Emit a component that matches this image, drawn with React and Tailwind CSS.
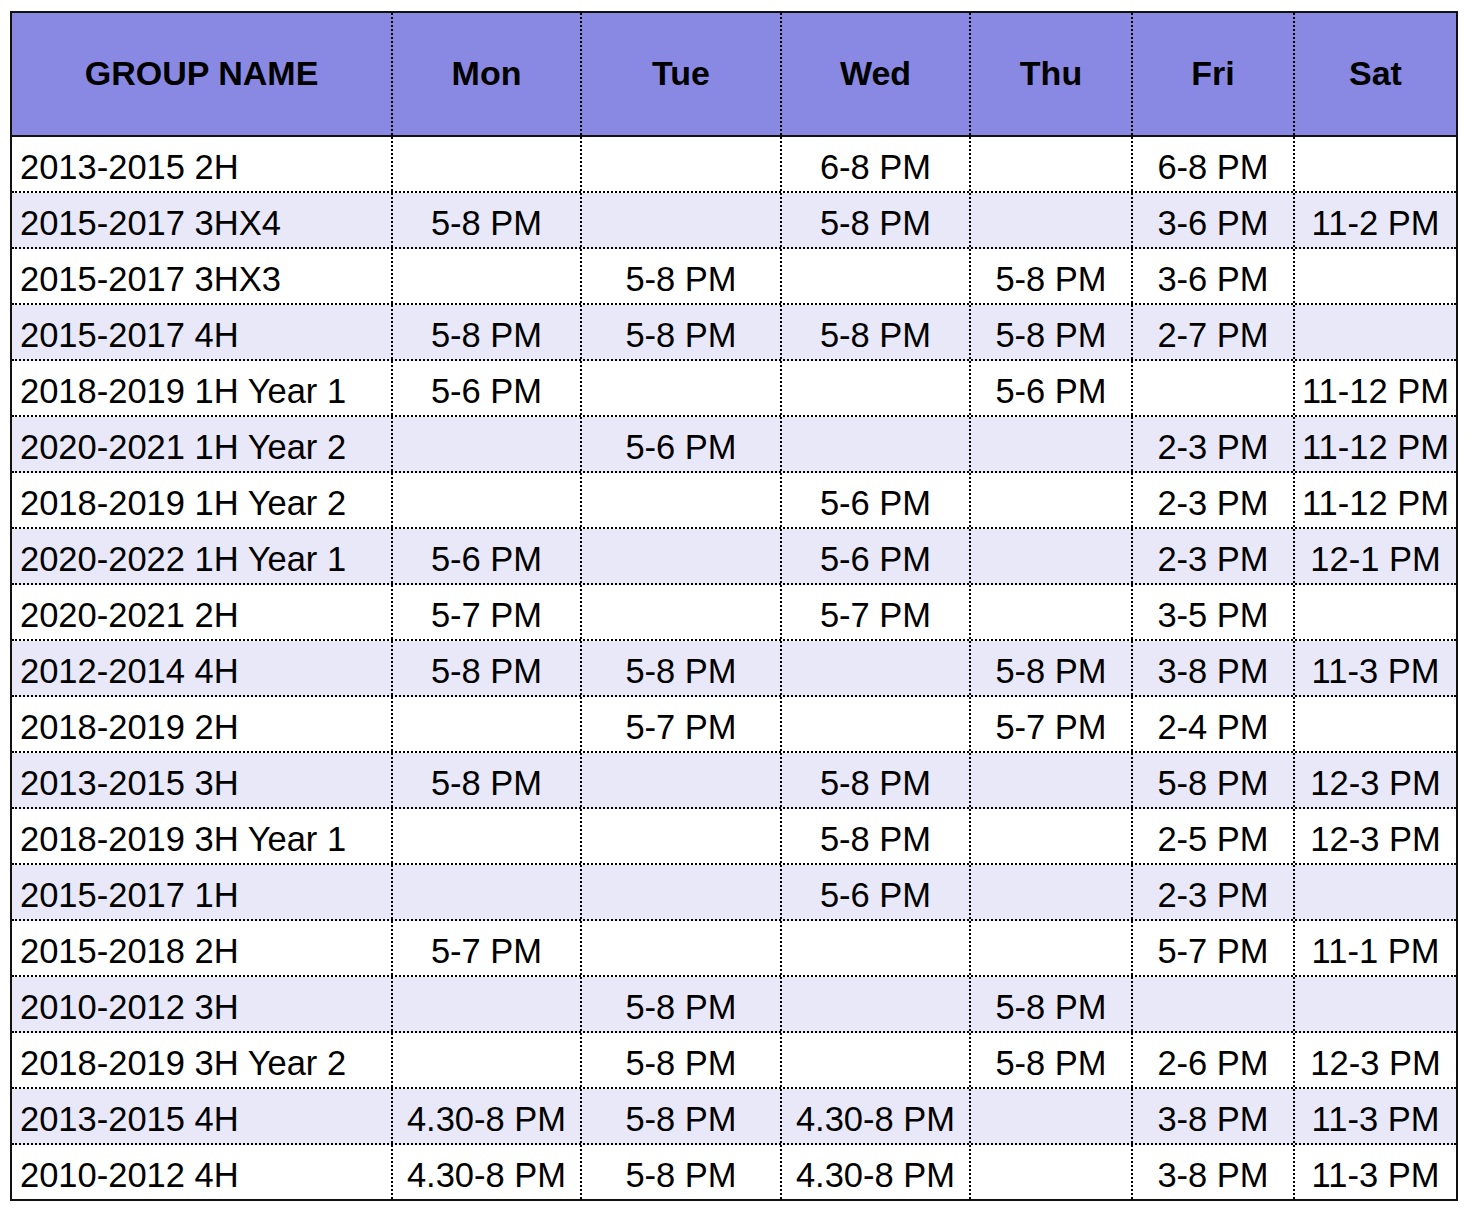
import React from "react";

const rows = [
  ["2013-2015 2H", "", "", "6-8 PM", "", "6-8 PM", ""],
  ["2015-2017 3HX4", "5-8 PM", "", "5-8 PM", "", "3-6 PM", "11-2 PM"],
  ["2015-2017 3HX3", "", "5-8 PM", "", "5-8 PM", "3-6 PM", ""],
  ["2015-2017 4H", "5-8 PM", "5-8 PM", "5-8 PM", "5-8 PM", "2-7 PM", ""],
  ["2018-2019 1H Year 1", "5-6 PM", "", "", "5-6 PM", "", "11-12 PM"],
  ["2020-2021 1H Year 2", "", "5-6 PM", "", "", "2-3 PM", "11-12 PM"],
  ["2018-2019 1H Year 2", "", "", "5-6 PM", "", "2-3 PM", "11-12 PM"],
  ["2020-2022 1H Year 1", "5-6 PM", "", "5-6 PM", "", "2-3 PM", "12-1 PM"],
  ["2020-2021 2H", "5-7 PM", "", "5-7 PM", "", "3-5 PM", ""],
  ["2012-2014 4H", "5-8 PM", "5-8 PM", "", "5-8 PM", "3-8 PM", "11-3 PM"],
  ["2018-2019 2H", "", "5-7 PM", "", "5-7 PM", "2-4 PM", ""],
  ["2013-2015 3H", "5-8 PM", "", "5-8 PM", "", "5-8 PM", "12-3 PM"],
  ["2018-2019 3H Year 1", "", "", "5-8 PM", "", "2-5 PM", "12-3 PM"],
  ["2015-2017 1H", "", "", "5-6 PM", "", "2-3 PM", ""],
  ["2015-2018 2H", "5-7 PM", "", "", "", "5-7 PM", "11-1 PM"],
  ["2010-2012 3H", "", "5-8 PM", "", "5-8 PM", "", ""],
  ["2018-2019 3H Year 2", "", "5-8 PM", "", "5-8 PM", "2-6 PM", "12-3 PM"],
  ["2013-2015 4H", "4.30-8 PM", "5-8 PM", "4.30-8 PM", "", "3-8 PM", "11-3 PM"],
  ["2010-2012 4H", "4.30-8 PM", "5-8 PM", "4.30-8 PM", "", "3-8 PM", "11-3 PM"],
];

const headers = ["GROUP NAME", "Mon", "Tue", "Wed", "Thu", "Fri", "Sat"];

const gridCols = "grid grid-cols-[381px_189px_200px_189px_162px_162px_161px]";

export default function App() {
  return (
    <div className="bg-white min-h-[1216px] pt-[11px] pl-[10px]" style={{ fontFamily: '"Liberation Sans", Arial, sans-serif' }}>
      <div className="w-[1448px] border-2 border-solid border-[#111]">
        <div className={`${gridCols} bg-[#8989e4] border-b-2 border-solid border-[#111]`}>
          {headers.map((h, i) => (
            <div
              key={h}
              className={`h-[122px] flex items-center justify-center pb-[2px] font-bold text-[34px] text-black whitespace-nowrap ${
                i < 6 ? "border-r-2 border-dotted border-black" : ""
              }`}
            >
              {h}
            </div>
          ))}
        </div>
        {rows.map((r, ri) => (
          <div
            key={ri}
            className={`${gridCols} ${ri % 2 === 1 ? "bg-[#e8e8f8]" : "bg-white"} ${
              ri < rows.length - 1 ? "border-b-2 border-dotted border-black" : ""
            }`}
          >
            {r.map((c, ci) => (
              <div
                key={ci}
                className={`h-[54px] flex items-center pt-[6px] text-[34.5px] leading-none text-black whitespace-nowrap ${
                  ci === 0 ? "justify-start pl-[8px]" : "justify-center"
                } ${ci < 6 ? "border-r-2 border-dotted border-black" : ""}`}
              >
                {c}
              </div>
            ))}
          </div>
        ))}
      </div>
    </div>
  );
}
